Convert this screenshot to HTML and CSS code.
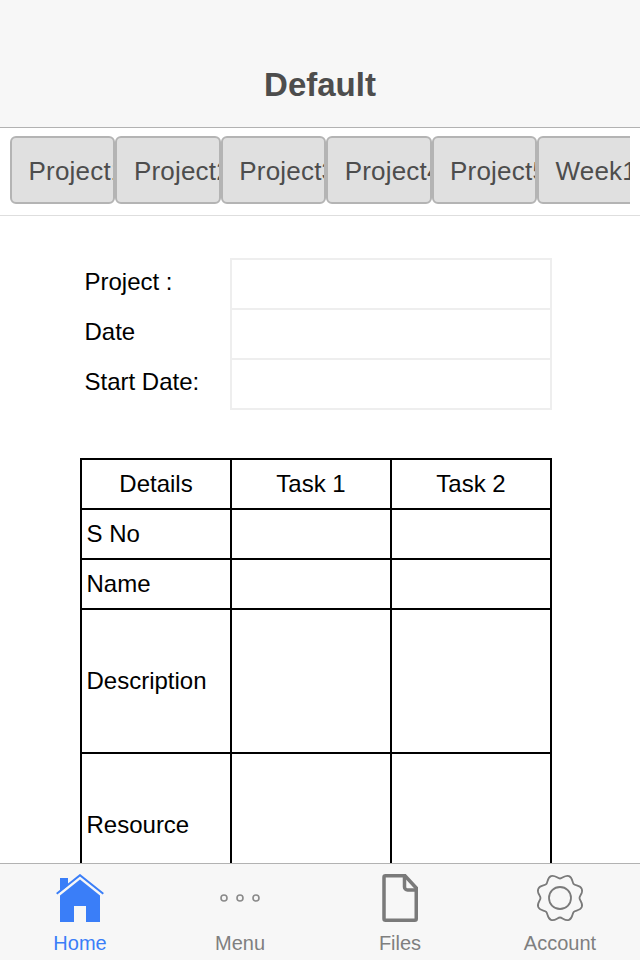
FILE: index.html
```html
<!DOCTYPE html>
<html lang="en">
<head>
    <meta charset="UTF-8">
    <meta name="viewport" content="width=device-width, initial-scale=1.0">
    <title>Default</title>
    <link rel="stylesheet" href="styles.css">
</head>
<body>
    <header class="title-bar">
        <h1>Default</h1>
    </header>

    <div class="tab-strip">
        <div class="tab-scroll">
            <a class="tab-btn">Project1</a>
            <a class="tab-btn">Project2</a>
            <a class="tab-btn">Project3</a>
            <a class="tab-btn">Project4</a>
            <a class="tab-btn">Project5</a>
            <a class="tab-btn">Week1</a>
        </div>
    </div>

    <main class="content">
        <table class="info-table">
            <tr><td class="info-label">Project :</td><td class="info-field"></td></tr>
            <tr><td class="info-label">Date</td><td class="info-field"></td></tr>
            <tr><td class="info-label">Start Date:</td><td class="info-field"></td></tr>
        </table>

        <table class="task-table">
            <tr class="row-small"><td class="center col-name">Details</td><td class="center col-task">Task 1</td><td class="center col-task">Task 2</td></tr>
            <tr class="row-small"><td>S No</td><td></td><td></td></tr>
            <tr class="row-small"><td>Name</td><td></td><td></td></tr>
            <tr class="row-big"><td>Description</td><td></td><td></td></tr>
            <tr class="row-big"><td>Resource</td><td></td><td></td></tr>
        </table>
    </main>

    <nav class="tab-bar">
        <a class="tab-item active">
            <svg class="tab-icon" width="48" height="48" viewBox="0 0 48 48">
                <path class="fill" d="M4 48V21.500L24 5.500l20 16V48H30V32H18v16z"/>
                <path class="fill" d="M4 4h8v7.500l-8 6.500z"/>
                <path class="roof" d="M.7 19.700 24 1.200l23.300 18.500"/>
            </svg>
            <span>Home</span>
        </a>
        <a class="tab-item">
            <svg class="tab-icon" width="48" height="48" viewBox="0 0 48 48">
                <circle class="dot" cx="8" cy="24" r="3"/>
                <circle class="dot" cx="24" cy="24" r="3"/>
                <circle class="dot" cx="40" cy="24" r="3"/>
            </svg>
            <span>Menu</span>
        </a>
        <a class="tab-item">
            <svg class="tab-icon" width="48" height="48" viewBox="0 0 48 48">
                <path class="file" d="M9.500 1.750H29L40.250 14v30.750a1.500 1.500 0 0 1-1.500 1.500H9.500a1.500 1.500 0 0 1-1.500-1.500V3.250a1.500 1.500 0 0 1 1.500-1.500z"/>
                <path class="file" d="M28.500 2v11a3 3 0 0 0 3 3H40"/>
            </svg>
            <span>Files</span>
        </a>
        <a class="tab-item">
            <svg class="tab-icon" width="48" height="48" viewBox="0 0 48 48">
                <path class="gear" d="M24 4.500C26.500 4.500 29.150 .59 33.030 2.200C36.910 3.810 36.020 8.440 37.790 10.210C39.560 11.980 44.190 11.090 45.800 14.970C47.410 18.850 43.500 21.500 43.500 24C43.500 26.500 47.410 29.150 45.800 33.030C44.190 36.910 39.560 36.020 37.790 37.790C36.020 39.560 36.910 44.190 33.030 45.800C29.150 47.410 26.500 43.500 24 43.500C21.500 43.500 18.850 47.410 14.970 45.800C11.090 44.190 11.980 39.560 10.210 37.790C8.440 36.020 3.810 36.910 2.200 33.030C.59 29.150 4.500 26.500 4.500 24C4.500 21.500 .59 18.850 2.200 14.970C3.810 11.090 8.440 11.980 10.210 10.210C11.980 8.440 11.090 3.810 14.970 2.200C18.850 .59 21.500 4.500 24 4.500Z"/>
                <circle class="gear-hub" cx="24" cy="24" r="11"/>
            </svg>
            <span>Account</span>
        </a>
    </nav>
</body>
</html>
```

FILE: styles.css
```css
html, body {
    height: 100%;
}
body {
    margin: 0;
    display: flex;
    flex-direction: column;
    font-family: "Liberation Sans", Arial, sans-serif;
    font-size: 24px;
    color: #000;
    background-color: #fff;
    overflow: hidden;
}

.title-bar {
    flex: none;
    height: 127px;
    display: flex;
    align-items: flex-end;
    justify-content: center;
    background-color: #f7f7f7;
    border-bottom: 1px solid #b2b2b2;
}
.title-bar h1 {
    margin: 0 0 22px;
    font-size: 33px;
    line-height: 40px;
    color: #4d4d4d;
}

.tab-strip {
    flex: none;
    height: 88px;
    padding: 8px 10px 0;
    box-sizing: border-box;
    border-bottom: 1px solid #dedede;
}
.tab-scroll {
    display: flex;
    overflow: hidden;
}
.tab-btn {
    flex: none;
    width: 105.4px;
    height: 68px;
    box-sizing: border-box;
    padding-left: 16.5px;
    overflow: hidden;
    white-space: nowrap;
    font-size: 26px;
    letter-spacing: 0.2px;
    line-height: 66px;
    color: #4d4d4d;
    background-color: #e0e0e0;
    border: 2px solid #b4b4b4;
    border-radius: 6px;
}

.content {
    flex: 1;
    min-height: 0;
    overflow: hidden;
    padding: 42px 0 0 80px;
}

.info-table {
    border-collapse: collapse;
    table-layout: fixed;
    width: 471px;
    margin-bottom: 48px;
}
.info-table td {
    height: 48px;
    padding: 0;
}
.info-table .info-label {
    width: 151px;
    padding: 0 0 4px 4.5px;
    box-sizing: border-box;
}
.info-field {
    width: 318px;
    border: 2px solid #eee;
}

.task-table {
    border-collapse: collapse;
    table-layout: fixed;
    width: 472px;
}
.task-table td {
    border: 2px solid #000;
    padding: 0 0 0 4.5px;
}
.task-table .center {
    text-align: center;
    padding: 0;
}
.col-name {
    width: 148px;
}
.col-task {
    width: 158px;
}
.row-small td {
    height: 48px;
}
.row-big td {
    height: 142px;
}

.tab-bar {
    flex: none;
    height: 96px;
    display: flex;
    background-color: #f7f7f7;
    border-top: 1px solid #b2b2b2;
}
.tab-item {
    flex: 1;
    display: flex;
    flex-direction: column;
    align-items: center;
    font-size: 20px;
    line-height: 24px;
    color: #7f7f7f;
}
.tab-item.active {
    color: #3a7ef8;
}
.tab-icon {
    display: block;
    margin-top: 10px;
    margin-bottom: 9px;
}
.fill {
    fill: #3a7ef8;
}
.roof {
    fill: none;
    stroke: #3a7ef8;
    stroke-width: 2;
}
.dot {
    fill: none;
    stroke: #8a8a8a;
    stroke-width: 1.6;
}
.file {
    fill: none;
    stroke: #7a7a7a;
    stroke-width: 3.5;
}
.gear, .gear-hub {
    fill: none;
    stroke: #7a7a7a;
    stroke-width: 1.8;
}
```
